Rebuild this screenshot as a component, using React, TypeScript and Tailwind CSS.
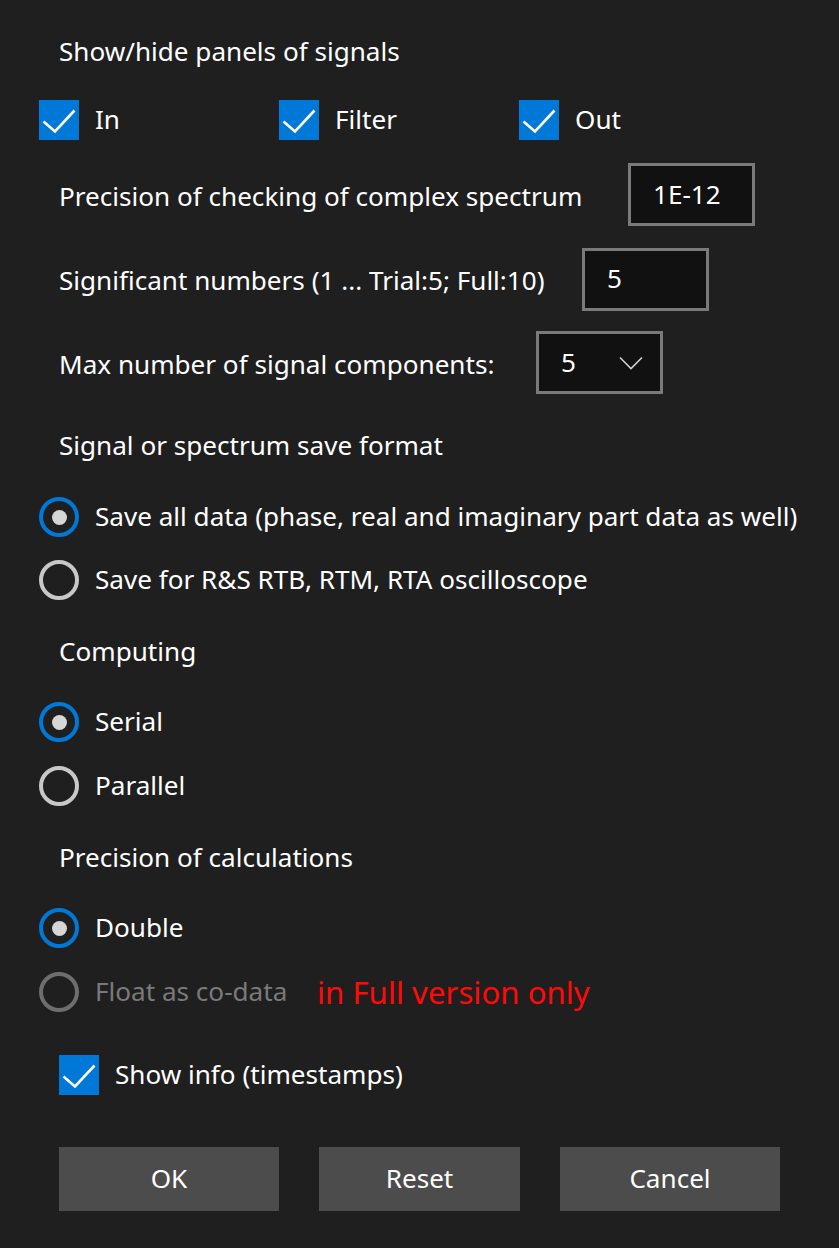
import React from 'react';

const font = { fontFamily: '"Noto Sans", "Open Sans", sans-serif' };

const Check: React.FC = () => (
  <div className="flex h-[40px] w-[40px] shrink-0 items-center justify-center bg-[#0078d7]">
    <svg width="40" height="40" viewBox="0 0 40 40" fill="none">
      <path d="M4.5 21.5 L16 31.5 L35.5 10.5" stroke="#fff" strokeWidth="2.6" />
    </svg>
  </div>
);

const Radio: React.FC<{ checked?: boolean; disabled?: boolean }> = ({ checked, disabled }) => (
  <div
    className={
      'flex h-[40px] w-[40px] shrink-0 items-center justify-center rounded-full border-[4px] ' +
      (checked ? 'border-[#0078d7]' : disabled ? 'border-[#6e6e6e]' : 'border-[#c8c8c8]')
    }
  >
    {checked && <div className="h-[15px] w-[15px] rounded-full bg-[#d6d6d6]" />}
  </div>
);

const Field: React.FC<{ value: string }> = ({ value }) => (
  <div className="flex h-[63px] w-[127px] shrink-0 items-center border-[3px] border-[#7a7a7a] bg-[#111111] pl-[22px] text-white">
    {value}
  </div>
);

export default function App() {
  return (
    <div className="h-[1248px] w-[839px] bg-[#1f1f1f] text-[26.1px] text-white" style={font}>
      <div className="flex flex-col pt-[32px]">
        <div className="flex h-[40px] items-center pl-[59px]">Show/hide panels of signals</div>

        <div className="mt-[28px] flex h-[40px] items-center pl-[39px]">
          <div className="flex w-[240px] items-center gap-[16px]">
            <Check />
            <span>In</span>
          </div>
          <div className="flex w-[240px] items-center gap-[16px]">
            <Check />
            <span>Filter</span>
          </div>
          <div className="flex items-center gap-[16px]">
            <Check />
            <span>Out</span>
          </div>
        </div>

        <div className="mt-[23px] flex h-[63px] items-center pl-[59px]">
          <span className="mt-[4px] w-[569px]">Precision of checking of complex spectrum</span>
          <Field value="1E-12" />
        </div>

        <div className="mt-[22px] flex h-[62px] items-center pl-[59px]">
          <span className="mt-[4px] w-[523px]">Significant numbers (1 ... Trial:5; Full:10)</span>
          <Field value="5" />
        </div>

        <div className="mt-[21px] flex h-[63px] items-center pl-[59px]">
          <span className="mt-[4px] w-[477px]">Max number of signal components:</span>
          <div className="flex h-[63px] w-[127px] shrink-0 items-center justify-between border-[3px] border-[#7a7a7a] bg-[#111111] pl-[22px] pr-[17px]">
            <span>5</span>
            <svg width="24" height="14" viewBox="0 0 24 14" fill="none">
              <path d="M1 1.5 L12 12.5 L23 1.5" stroke="#d0d0d0" strokeWidth="1.6" />
            </svg>
          </div>
        </div>

        <div className="mt-[32px] flex h-[40px] items-center pl-[59px]">Signal or spectrum save format</div>

        <div className="mt-[31px] flex h-[40px] items-center gap-[16px] pl-[39px]">
          <Radio checked />
          <span>Save all data (phase, real and imaginary part data as well)</span>
        </div>
        <div className="mt-[23px] flex h-[40px] items-center gap-[16px] pl-[39px]">
          <Radio />
          <span>Save for R&amp;S RTB, RTM, RTA oscilloscope</span>
        </div>

        <div className="mt-[32px] flex h-[40px] items-center pl-[59px]">Computing</div>

        <div className="mt-[30px] flex h-[40px] items-center gap-[16px] pl-[39px]">
          <Radio checked />
          <span>Serial</span>
        </div>
        <div className="mt-[24px] flex h-[40px] items-center gap-[16px] pl-[39px]">
          <Radio />
          <span>Parallel</span>
        </div>

        <div className="mt-[32px] flex h-[40px] items-center pl-[59px]">Precision of calculations</div>

        <div className="mt-[30px] flex h-[40px] items-center gap-[16px] pl-[39px]">
          <Radio checked />
          <span>Double</span>
        </div>
        <div className="mt-[24px] flex h-[40px] items-center pl-[39px]">
          <Radio disabled />
          <span className="ml-[16px] w-[222px] text-[#7a7a7a]">Float as co-data</span>
          <span className="text-[31.2px] text-[#ff0a0a]">in Full version only</span>
        </div>

        <div className="mt-[43px] flex h-[40px] items-center gap-[16px] pl-[59px]">
          <Check />
          <span>Show info (timestamps)</span>
        </div>

        <div className="mt-[52px] flex pl-[59px]">
          <button className="h-[64px] w-[220px] bg-[#4c4c4c] text-white">OK</button>
          <button className="ml-[40px] h-[64px] w-[201px] bg-[#4c4c4c] text-white">Reset</button>
          <button className="ml-[40px] h-[64px] w-[220px] bg-[#4c4c4c] text-white">Cancel</button>
        </div>
      </div>
    </div>
  );
}
